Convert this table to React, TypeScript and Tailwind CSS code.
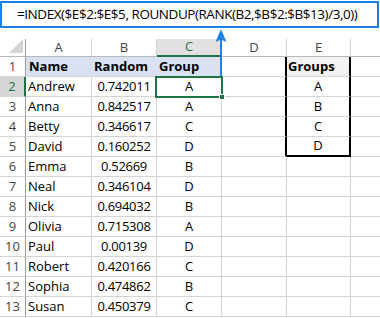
import React from 'react';

type Row = { name: string; random: string; group: string };

const rows: Row[] = [
  { name: 'Andrew', random: '0.742011', group: 'A' },
  { name: 'Anna', random: '0.842517', group: 'A' },
  { name: 'Betty', random: '0.346617', group: 'C' },
  { name: 'David', random: '0.160252', group: 'D' },
  { name: 'Emma', random: '0.52669', group: 'B' },
  { name: 'Neal', random: '0.346104', group: 'D' },
  { name: 'Nick', random: '0.694032', group: 'B' },
  { name: 'Olivia', random: '0.715308', group: 'A' },
  { name: 'Paul', random: '0.00139', group: 'D' },
  { name: 'Robert', random: '0.420166', group: 'C' },
  { name: 'Sophia', random: '0.474862', group: 'B' },
  { name: 'Susan', random: '0.450379', group: 'C' },
];

const groups = ['A', 'B', 'C', 'D'];

const grid = 'border-r border-b border-[#d4d4d4]';

function RowHeader({ n, active }: { n: number; active?: boolean }) {
  return (
    <div
      className={`h-5 flex items-center justify-center border-b border-[#d4d4d4] text-[13px] ${
        active
          ? 'bg-[#d6d6d6] text-[#217346] border-r-2 border-r-[#217346]'
          : 'text-[#444] border-r border-r-[#9e9e9e]'
      }`}
    >
      {n}
    </div>
  );
}

export default function App() {
  return (
    <div className="w-[380px] h-[318px] bg-white relative overflow-hidden font-['Open_Sans',sans-serif] text-black">
      {/* formula bar */}
      <div className="mt-px h-[27px] w-[379px] border-2 border-[#1a82e4] flex items-center pl-[15px] text-[13.5px] tracking-[-0.45px] whitespace-nowrap">
        =INDEX($E$2:$E$5, ROUNDUP(RANK(B2,$B$2:$B$13)/3,0))
      </div>

      {/* sheet */}
      <div className="mt-[11px] relative grid grid-cols-[26px_66px_65px_65px_65px_64px_1fr] text-[13px]">
        {/* column headers */}
        <div className="h-[18px] border-r border-r-[#9e9e9e] border-b border-b-[#b8b8b8] relative">
          <svg className="absolute right-[2px] bottom-[3px]" width="14" height="14" viewBox="0 0 14 14">
            <polygon points="14,0 14,14 0,14" fill="#d4d4d4" />
          </svg>
        </div>
        {['A', 'B'].map((c) => (
          <div key={c} className="h-[18px] flex items-center justify-center text-[#444] border-r border-r-[#d4d4d4] border-b border-b-[#b8b8b8]">
            {c}
          </div>
        ))}
        <div className="h-[18px] flex items-center justify-center text-[#217346] bg-[#e1e1e1] border-r border-r-[#d4d4d4] border-b-2 border-b-[#217346]">
          C
        </div>
        {['D', 'E'].map((c) => (
          <div key={c} className="h-[18px] flex items-center justify-center text-[#444] border-r border-r-[#d4d4d4] border-b border-b-[#b8b8b8]">
            {c}
          </div>
        ))}
        <div className="h-[18px] border-b border-b-[#b8b8b8]" />

        {/* row 1 */}
        <RowHeader n={1} />
        <div className="h-5 flex items-center pl-[3px] font-bold bg-[#d9e1f2] border-b border-[#d4d4d4]">Name</div>
        <div className="h-5 flex items-center pl-[2px] font-bold bg-[#d9e1f2] border-b border-[#d4d4d4]">Random</div>
        <div className="h-5 flex items-center pl-[2px] font-bold bg-[#d9e1f2] border-b border-[#d4d4d4] border-r border-r-[#d9e1f2]">Group</div>
        <div className="h-5 border-b border-[#d4d4d4] border-r-2 border-r-black" />
        <div className="h-5 flex items-center pl-[1px] font-bold bg-[#f2f2f2] border-b border-[#d4d4d4] border-r-2 border-r-black">Groups</div>
        <div className="h-5 border-b border-[#d4d4d4]" />

        {/* data rows */}
        {rows.map((r, i) => {
          const g = groups[i];
          const lastGroup = i === groups.length - 1;
          return (
            <React.Fragment key={r.name}>
              <RowHeader n={i + 2} active={i === 0} />
              <div className={`h-5 flex items-center pl-[2px] ${grid}`}>{r.name}</div>
              <div className={`h-5 flex items-center justify-center tracking-[-0.3px] ${grid}`}>{r.random}</div>
              <div className={`h-5 flex items-center justify-center ${grid}`}>{r.group}</div>
              <div className={`h-5 border-b border-[#d4d4d4] ${g ? 'border-r-2 border-r-black' : 'border-r border-r-[#d4d4d4]'}`} />
              <div
                className={`h-5 flex items-center justify-center ${
                  g ? 'border-r-2 border-r-black' : 'border-r border-r-[#d4d4d4]'
                } ${lastGroup ? 'border-b-2 border-b-black' : 'border-b border-b-[#d4d4d4]'}`}
              >
                {g}
              </div>
              <div className="h-5 border-b border-[#d4d4d4]" />
            </React.Fragment>
          );
        })}

        {/* active cell C2 */}
        <div className="absolute left-[155px] top-[37px] w-[68px] h-[22px] border-2 border-[#217346] pointer-events-none" />
        <div className="absolute left-[219px] top-[55px] w-[6px] h-[6px] bg-[#217346] border border-white pointer-events-none" />
      </div>

      {/* pointer from formula to the cell */}
      <svg className="absolute left-[214px] top-[28px]" width="14" height="48" viewBox="0 0 14 48">
        <defs>
          <linearGradient id="arrowFill" x1="0" y1="0" x2="0" y2="1">
            <stop offset="0" stopColor="#4aa8f5" />
            <stop offset="0.3" stopColor="#1a82e4" />
          </linearGradient>
        </defs>
        <rect x="6" y="8" width="2" height="40" fill="#1a82e4" />
        <path d="M7 1 L12.5 14 L7 11.5 L1.5 14 Z" fill="url(#arrowFill)" />
      </svg>
    </div>
  );
}
